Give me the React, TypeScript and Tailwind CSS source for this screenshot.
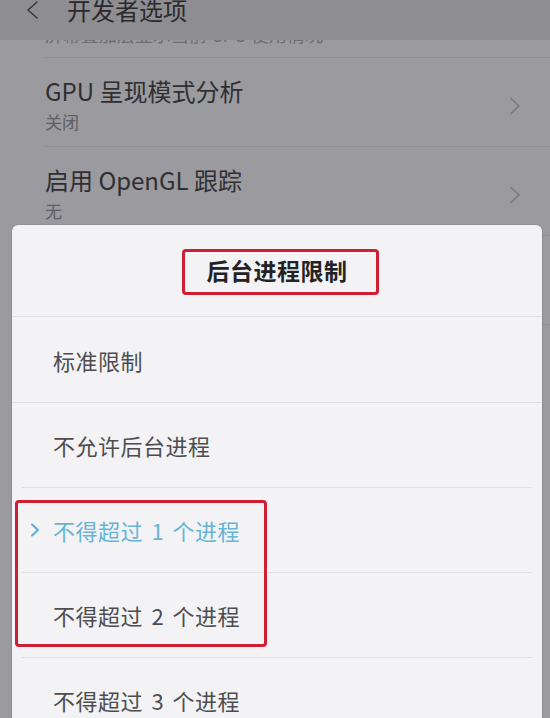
import React from "react";

const font = { fontFamily: '"Noto Sans CJK SC", "Noto Sans", sans-serif' };

function Chevron() {
  return (
    <svg width="14" height="18" viewBox="0 0 14 18" className="shrink-0">
      <path d="M3 1.5 L11 9 L3 16.5" fill="none" stroke="#77767b" strokeWidth="1.4" strokeLinecap="round" strokeLinejoin="round" />
    </svg>
  );
}

function BgRow({ title, sub }: { title: string; sub: string }) {
  return (
    <div className="ml-[45px] h-[89px] border-b border-[#8f8e93] flex items-start pt-[21px] pr-[28px]">
      <div className="flex-1 flex flex-col">
        <div className="text-[24px] leading-[24px] text-[#2f2f31]">{title}</div>
        <div className="mt-[10px] text-[17px] leading-[17px] text-[#5f5e63]">{sub}</div>
      </div>
      <div className="mt-[18px]">
        <Chevron />
      </div>
    </div>
  );
}

const options = [
  { label: "标准限制", selected: false },
  { label: "不允许后台进程", selected: false },
  { label: "不得超过 1 个进程", selected: true },
  { label: "不得超过 2 个进程", selected: false },
  { label: "不得超过 3 个进程", selected: false },
];

export default function App() {
  return (
    <div className="relative w-[550px] h-[718px] overflow-hidden bg-[#9b9a9f]" style={font}>
      {/* header */}
      <div className="h-[40px] bg-[#8e8d92] overflow-hidden">
        <div className="-mt-[12px] h-[44px] flex items-center">
          <svg width="16" height="18" viewBox="0 0 16 18" className="ml-[24px]">
            <path d="M13 1 L4 9 L13 17" fill="none" stroke="#3a393d" strokeWidth="1.6" strokeLinecap="round" strokeLinejoin="round" />
          </svg>
          <div className="ml-[27px] text-[24px] leading-[24px] text-[#2a2a2c]">开发者选项</div>
        </div>
      </div>

      {/* cut-off row */}
      <div className="ml-[45px] h-[18px] border-b border-[#8f8e93] overflow-hidden flex items-end pb-[14px]">
        <div className="text-[18px] leading-[18px] text-[#6e6d72] whitespace-nowrap">屏幕叠加层显示当前 CPU 使用情况</div>
      </div>

      <BgRow title="GPU 呈现模式分析" sub="关闭" />
      <BgRow title="启用 OpenGL 跟踪" sub="无" />
      <BgRow title="在屏幕上显示 GPU 视图更新" sub="关闭" />

      {/* dialog */}
      <div className="absolute left-[12px] top-[225px] w-[530px] h-[520px] bg-[#f3f3f5] rounded-t-[6px] shadow-[0_0_2px_rgba(0,0,0,0.25)]">
        <div className="h-[92px] border-b border-[#dfdfe2] flex items-center justify-center">
          <div className="text-[23px] leading-[23px] font-bold text-[#232325] tracking-[0.5px]">后台进程限制</div>
        </div>
        {options.map((o, i) => (
          <div
            key={i}
            className={
              i === 0
                ? "h-[86px] border-b border-[#dfdfe2] flex items-center"
                : "mx-[10px] h-[85px] border-b border-[#dfdfe2] flex items-center"
            }
          >
            <div className={i === 0 ? "ml-[18px] w-[23px] flex items-center" : "ml-[8px] w-[23px] flex items-center"}>
              {o.selected && (
                <svg width="10" height="14" viewBox="0 0 10 14">
                  <path d="M2 1.5 L8 7 L2 12.5" fill="none" stroke="#5aaed3" strokeWidth="2" strokeLinecap="round" strokeLinejoin="round" />
                </svg>
              )}
            </div>
            <div
              className={
                o.selected
                  ? "text-[22px] leading-[22px] text-[#68b4d6] [word-spacing:3px] tracking-[0.5px]"
                  : "text-[22px] leading-[22px] text-[#4d4d50] [word-spacing:3px] tracking-[0.5px]"
              }
            >
              {o.label}
            </div>
          </div>
        ))}

        {/* annotation boxes */}
        <div className="absolute left-[170px] top-[24px] w-[197px] h-[46px] border-[3px] border-[#cf1f35] rounded-[4px]" />
        <div className="absolute left-[3px] top-[275px] w-[252px] h-[147px] border-[3px] border-[#cf1f35] rounded-[4px]" />
      </div>
    </div>
  );
}
